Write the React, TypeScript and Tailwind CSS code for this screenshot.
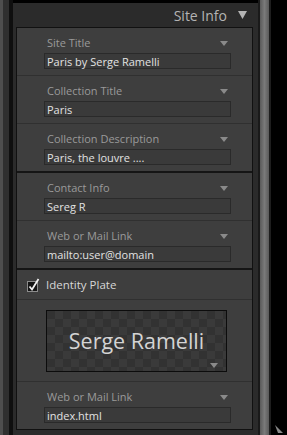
import React from "react";

const font = { fontFamily: '"Open Sans", "Liberation Sans", sans-serif' };

function Caret({ className = "" }: { className?: string }) {
  return (
    <svg width="8" height="5" viewBox="0 0 8 5" className={className}>
      <path d="M0 0h8L4 5z" fill="#8a8a8a" />
    </svg>
  );
}

function Field({
  label,
  value,
  divider = true,
}: {
  label: string;
  value: string;
  divider?: boolean;
}) {
  return (
    <div className={`pt-[7px] pb-[6px] ${divider ? "border-b border-[#303030]" : ""}`}>
      <div className="flex h-[16px] items-center justify-between pl-[30px] pr-[24px]">
        <span className="text-[11px] text-[#9a9a9a]">{label}</span>
        <Caret />
      </div>
      <div className="mt-[2px] ml-[27px] mr-[21px] flex h-[16px] items-center border border-[#2a2a2a] bg-[#3a3a3a] px-[2px]">
        <span className="text-[11px] leading-none text-[#e2e2e2]">{value}</span>
      </div>
    </div>
  );
}

export default function App() {
  return (
    <div className="flex h-[435px] w-[287px] overflow-hidden bg-black" style={font}>
      <div className="w-[3px] bg-[#4e4e4e]" />
      <div className="w-[6px] bg-[#2f2f2f]" />
      <div className="w-[4px] bg-[#0f0f0f]" />

      <div className="flex w-[245px] flex-col border-t-[3px] border-black bg-[#2b2b2b]">
        {/* Header */}
        <div className="flex h-[24px] shrink-0 items-center justify-end gap-[11px] pr-[11px]">
          <span className="text-[14px] text-[#b4b4b4]">Site Info</span>
          <svg width="9" height="8" viewBox="0 0 9 8">
            <path d="M0 0h9L4.5 8z" fill="#b4b4b4" />
          </svg>
        </div>

        {/* Panel */}
        <div className="mb-[5px] ml-[3px] mr-[5px] flex-1 border border-[#111] bg-[#3e3e3e]">
          <Field label="Site Title" value="Paris by Serge Ramelli" />
          <Field label="Collection Title" value="Paris" />
          <Field label="Collection Description" value="Paris, the louvre ...." divider={false} />

          <div className="border-t-2 border-[#151515]">
            <Field label="Contact Info" value="Sereg R" />
            <Field label="Web or Mail Link" value="mailto:user@domain" divider={false} />
          </div>

          <div className="border-t-2 border-[#151515]">
            <div className="flex h-[30px] items-center gap-[6px] border-b border-[#303030] pl-[10px]">
              <svg width="13" height="14" viewBox="0 0 13 14">
                <rect x="0.5" y="3.5" width="10" height="10" fill="#141414" stroke="#8c8c8c" />
                <path d="M2.5 8.5l2.5 3L11.5 1" fill="none" stroke="#f0f0f0" strokeWidth="1.8" />
              </svg>
              <span className="text-[11.5px] text-[#d6d6d6]">Identity Plate</span>
            </div>

            <div className="border-b border-[#303030] pt-[10px] pb-[9px]">
              <div className="relative ml-[29px] mr-[25px] flex h-[62px] items-center justify-center border border-[#0c0c0c] bg-[conic-gradient(#3a3a3a_25%,#323232_0_50%,#3a3a3a_0_75%,#323232_0)] bg-[length:16px_16px]">
                <span className="text-[21.5px] text-[#d4d4d4]">Serge Ramelli</span>
                <Caret className="absolute bottom-[3px] right-[8px]" />
              </div>
            </div>

            <Field label="Web or Mail Link" value="index.html" divider={false} />
          </div>
        </div>
      </div>

      <div className="w-[2px] bg-[#1a1a1a]" />
      <div className="w-[9px] bg-[linear-gradient(90deg,#5a5a5a,#7a7a7a_50%,#5a5a5a)]" />
      <div className="w-[2px] bg-[#1e1e1e]" />
      <div className="relative flex-1 bg-black">
        <svg width="8" height="10" viewBox="0 0 8 10" className="absolute bottom-0 left-[4px]">
          <path d="M0 0l8 8H3z" fill="#8a8a8a" />
        </svg>
      </div>
    </div>
  );
}
